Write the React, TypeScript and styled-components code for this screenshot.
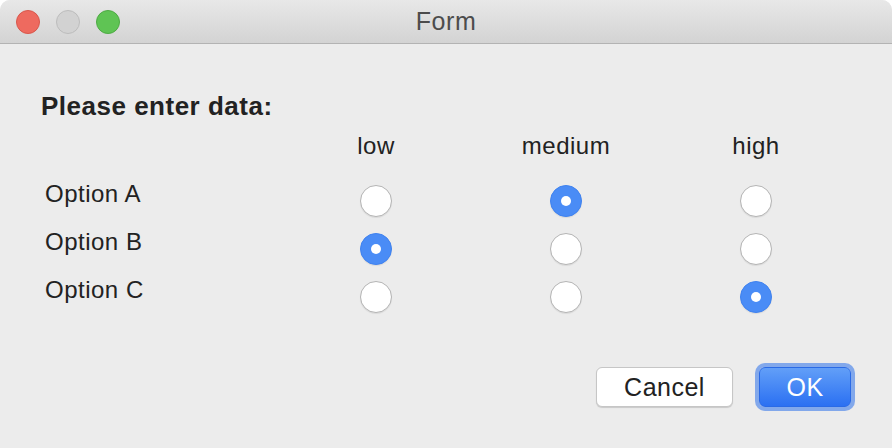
import React, { useState } from 'react'
import styled, { createGlobalStyle } from 'styled-components'

const Global = createGlobalStyle`
	html, body {
		margin: 0;
		padding: 0;
		background: #ffffff;
	}
	body {
		font-family: "Liberation Sans", Arial, sans-serif;
	}
`

const Window = styled.div`
	width: 892px;
	height: 448px;
	background: #ececec;
	border-radius: 10px 10px 0 0;
	overflow: hidden;
	display: flex;
	flex-direction: column;
`
const TitleBar = styled.div`
	height: 43px;
	flex-shrink: 0;
	border-bottom: 1px solid #b3b3b3;
	background: linear-gradient(#e8e8e8, #d3d3d3);
	display: flex;
	align-items: center;
	position: relative;
	padding-left: 16px;
	gap: 16px;
`
const Light = styled.span<{ $fill: string; $edge: string }>`
	width: 24px;
	height: 24px;
	border-radius: 50%;
	background: ${p => p.$fill};
	border: 1px solid ${p => p.$edge};
	box-sizing: border-box;
`
const Title = styled.div`
	position: absolute;
	left: 0;
	right: 0;
	top: 0;
	bottom: 0;
	display: flex;
	align-items: center;
	justify-content: center;
	font-size: 25px;
	letter-spacing: 0.6px;
	color: #4c4c4c;
	pointer-events: none;
`
const Body = styled.div`
	flex: 1;
	padding: 48px 41px 0 41px;
	display: flex;
	flex-direction: column;
`
const Heading = styled.div`
	font-weight: bold;
	font-size: 26px;
	letter-spacing: 0.5px;
	color: #222;
	line-height: 28px;
`
const Grid = styled.div`
	display: grid;
	grid-template-columns: 240px repeat(3, 190px);
	grid-template-rows: 44px repeat(3, 48px);
	margin-top: 4px;
`
const ColHead = styled.div`
	display: flex;
	justify-content: center;
	align-items: center;
	font-size: 24px;
	letter-spacing: 0.5px;
	color: #222;
`
const RowLabel = styled.div`
	font-size: 24px;
	letter-spacing: 0.5px;
	color: #222;
	padding-left: 4px;
	line-height: 28px;
	padding-top: 12px;
`
const Cell = styled.div`
	display: flex;
	justify-content: center;
	padding-top: 17px;
`
const Radio = styled.button<{ $on: boolean }>`
	width: 32px;
	height: 32px;
	border-radius: 50%;
	padding: 0;
	box-sizing: border-box;
	cursor: pointer;
	display: flex;
	align-items: center;
	justify-content: center;
	border: ${p => (p.$on ? '1px solid #3f82f0' : '1px solid #b4b4b4')};
	background: ${p => (p.$on ? '#4a8cf6' : '#ffffff')};
	box-shadow: 0 1px 1px rgba(0, 0, 0, 0.08);
`
const Dot = styled.span`
	width: 10px;
	height: 10px;
	border-radius: 50%;
	background: #fff;
`
const Buttons = styled.div`
	margin-top: 55px;
	display: flex;
	justify-content: flex-end;
	align-items: center;
	gap: 26px;
`
const Button = styled.button<{ $primary?: boolean }>`
	height: 40px;
	border-radius: 6px;
	font-family: "Liberation Sans", Arial, sans-serif;
	font-size: 25px;
	letter-spacing: 0.5px;
	padding: 0;
	box-sizing: border-box;
	width: ${p => (p.$primary ? '92px' : '137px')};
	color: ${p => (p.$primary ? '#fff' : '#222')};
	border: ${p => (p.$primary ? '1px solid #2a6ae6' : '1px solid #c6c6c6')};
	background: ${p => (p.$primary ? 'linear-gradient(#629ff8, #2b70f2)' : '#fff')};
	box-shadow: ${p =>
		p.$primary
			? '0 0 0 4px rgba(95, 145, 235, 0.75)'
			: '0 1px 1px rgba(0, 0, 0, 0.15)'};
`

const levels = ['low', 'medium', 'high']
const options = ['Option A', 'Option B', 'Option C']

export default function App() {
	const [picked, setPicked] = useState<number[]>([1, 0, 2])

	const choose = (row: number, col: number) => {
		const next = [...picked]
		next[row] = col
		setPicked(next)
	}

	return (
		<>
			<Global />
			<Window>
				<TitleBar>
					<Light $fill="#ee6a5f" $edge="#d8574c" />
					<Light $fill="#d2d2d2" $edge="#bcbcbc" />
					<Light $fill="#5fc454" $edge="#4eaa44" />
					<Title>Form</Title>
				</TitleBar>
				<Body>
					<Heading>Please enter data:</Heading>
					<Grid>
						<div />
						{levels.map(l => (
							<ColHead key={l}>{l}</ColHead>
						))}
						{options.map((o, r) => (
							<React.Fragment key={o}>
								<RowLabel>{o}</RowLabel>
								{levels.map((l, c) => (
									<Cell key={l}>
										<Radio $on={picked[r] === c} onClick={() => choose(r, c)}>
											{picked[r] === c && <Dot />}
										</Radio>
									</Cell>
								))}
							</React.Fragment>
						))}
					</Grid>
					<Buttons>
						<Button>Cancel</Button>
						<Button $primary>OK</Button>
					</Buttons>
				</Body>
			</Window>
		</>
	)
}
